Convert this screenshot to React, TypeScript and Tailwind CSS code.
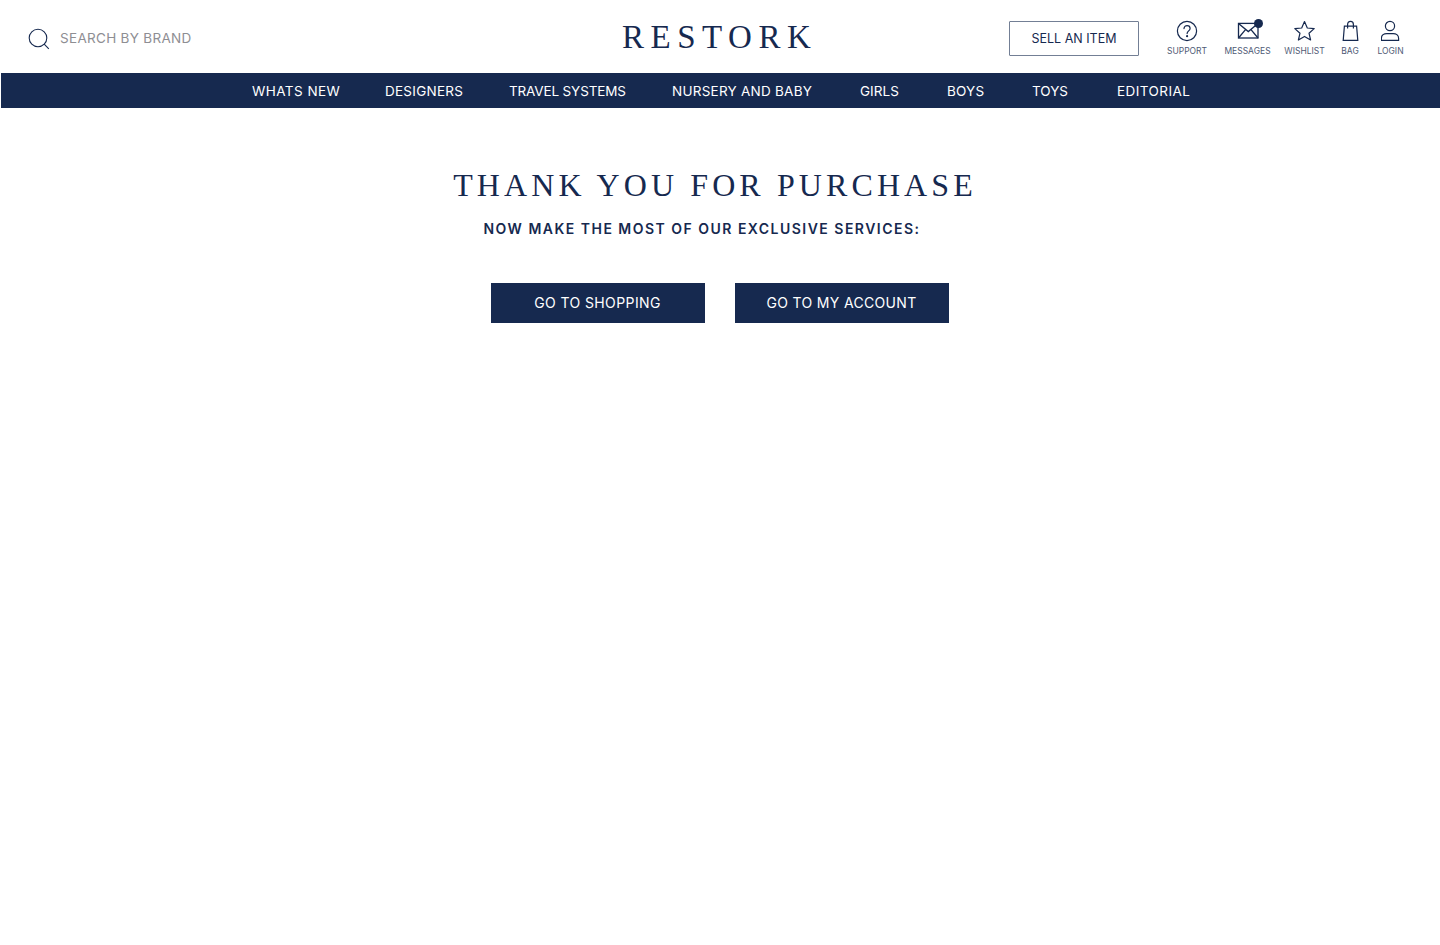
const navItems = [
  { label: 'WHATS NEW', cls: 'w-[133px] tracking-[0.45px]' },
  { label: 'DESIGNERS', cls: 'w-[124px] tracking-[0.25px]' },
  { label: 'TRAVEL SYSTEMS', cls: 'w-[163px] tracking-[-0.15px]' },
  { label: 'NURSERY AND BABY', cls: 'w-[188px] tracking-[0.25px]' },
  { label: 'GIRLS', cls: 'w-[87px] tracking-[0.05px]' },
  { label: 'BOYS', cls: 'w-[85px] tracking-[0.2px]' },
  { label: 'TOYS', cls: 'w-[85px]' },
  { label: 'EDITORIAL', cls: 'w-[90px] tracking-[0.45px]' },
];

const SearchIcon = () => (
  <svg width="22" height="22" viewBox="0 0 22 22" fill="none" stroke="#16294f" strokeWidth="1.1">
    <circle cx="10" cy="10" r="8.8" />
    <path d="M16.2 16.2l4.6 4.6" />
  </svg>
);

const SupportIcon = () => (
  <svg width="22" height="22" viewBox="0 0 22 22" fill="none" stroke="#16294f" strokeWidth="1.2">
    <circle cx="11" cy="11" r="9.6" />
    <path d="M8 8.6c0-1.8 1.4-3 3.1-3s3 1.2 3 2.8c0 2.4-3 2.6-3 5.2" strokeLinecap="round" />
    <circle cx="11.1" cy="16.2" r="0.5" fill="#16294f" />
  </svg>
);

const MessagesIcon = () => (
  <div className="relative w-[26px] h-[22px]">
    <svg width="26" height="22" viewBox="0 0 26 22" fill="none" stroke="#16294f" strokeWidth="1.3">
      <rect x="3.5" y="3.4" width="19.5" height="14.6" />
      <path d="M3.5 3.4l9.8 8.2 9.7-8.2M3.5 18l7-8.4M23 18l-7-8.4" />
    </svg>
    <span className="absolute right-[-2px] top-[-1px] w-[9px] h-[9px] rounded-full bg-[#16294f]" />
  </div>
);

const WishlistIcon = () => (
  <svg width="22" height="22" viewBox="0 0 22 22" fill="none" stroke="#16294f" strokeWidth="1.2" strokeLinejoin="round">
    <path d="M10.5 1.6l2.8 6.4 6.9.6-5.2 4.6 1.6 6.8-6.1-3.6-6.1 3.6 1.6-6.8-5.2-4.6 6.9-.6z" />
  </svg>
);

const BagIcon = () => (
  <svg width="20" height="22" viewBox="0 0 20 22" fill="none" stroke="#16294f" strokeWidth="1.2">
    <path d="M4.4 6.2h12.2l1.2 14.2H3.2z" />
    <path d="M7.6 8.6V4.4C7.6 2.6 8.6 1.4 10.5 1.4s2.9 1.2 2.9 3v4.2" />
  </svg>
);

const UserIcon = () => (
  <svg width="20" height="22" viewBox="0 0 20 22" fill="none" stroke="#16294f" strokeWidth="1.2">
    <circle cx="9" cy="6" r="4.6" />
    <path d="M.4 20.4v-2.2c0-3 2.6-4.6 5.4-4.6h6.4c2.8 0 5.4 1.6 5.4 4.6v2.2z" />
  </svg>
);

const headerLinks = [
  { label: 'SUPPORT', icon: <SupportIcon />, cls: 'w-[40px] mr-[18px]' },
  { label: 'MESSAGES', icon: <MessagesIcon />, cls: 'w-[45px] mr-[15px]' },
  { label: 'WISHLIST', icon: <WishlistIcon />, cls: 'w-[39px] mr-[17px]' },
  { label: 'BAG', icon: <BagIcon />, cls: 'w-[18px] mr-[18px]' },
  { label: 'LOGIN', icon: <UserIcon />, cls: 'w-[27px]' },
];

export default function App() {
  return (
    <div className="min-h-[945px] bg-white font-['Inter',sans-serif] text-[#16294f]">
      {/* Header */}
      <header className="h-[73px] flex items-center pl-[28px] pr-[36px]">
        <div className="flex items-center w-[594px] mt-[4px]">
          <SearchIcon />
          <span className="ml-[10px] text-[13.5px] tracking-[0.3px] text-[#8e8e93]">SEARCH BY BRAND</span>
        </div>
        <div className="font-['Liberation_Serif',serif] text-[33px] leading-none tracking-[6.5px] mt-[2px] w-[387px]">
          RESTORK
        </div>
        <button className="w-[130px] h-[35px] pt-[1px] border border-[#16294f]/60 rounded-[1px] text-[12.5px] mt-[4px] mr-[28px]">
          SELL AN ITEM
        </button>
        <div className="flex items-start mt-[4px]">
          {headerLinks.map(item => (
            <div key={item.label} className={`flex flex-col items-center ${item.cls}`}>
              <div className="h-[22px] flex items-center justify-center">{item.icon}</div>
              <span className="mt-[3px] text-[8.5px] leading-[12px] whitespace-nowrap text-[#4f5a75]">{item.label}</span>
            </div>
          ))}
        </div>
      </header>

      {/* Nav */}
      <nav className="h-[35px] ml-[1px] bg-[#16294f] flex items-center pl-[251px] pt-[2px] text-white text-[13.5px]">
        {navItems.map(item => (
          <a key={item.label} className={`block whitespace-nowrap ${item.cls}`}>{item.label}</a>
        ))}
      </nav>

      {/* Thank you */}
      <main className="flex flex-col items-center">
        <h1 className="mt-[57px] mr-[10px] font-['Liberation_Serif',serif] text-[32px] leading-[40px] tracking-[4.1px]">
          THANK YOU FOR PURCHASE
        </h1>
        <p className="mt-[14px] mr-[36px] text-[14px] leading-[20px] font-semibold tracking-[1.48px]">
          NOW MAKE THE MOST OF OUR EXCLUSIVE SERVICES:
        </p>
        <div className="mt-[44px] mr-[1px] flex gap-[30px]">
          <button className="w-[214px] h-[40px] pb-[2px] bg-[#16294f] text-white text-[14px] tracking-[0.4px]">GO TO SHOPPING</button>
          <button className="w-[214px] h-[40px] pb-[2px] bg-[#16294f] text-white text-[14px] tracking-[0.33px]">GO TO MY ACCOUNT</button>
        </div>
      </main>
    </div>
  );
}
